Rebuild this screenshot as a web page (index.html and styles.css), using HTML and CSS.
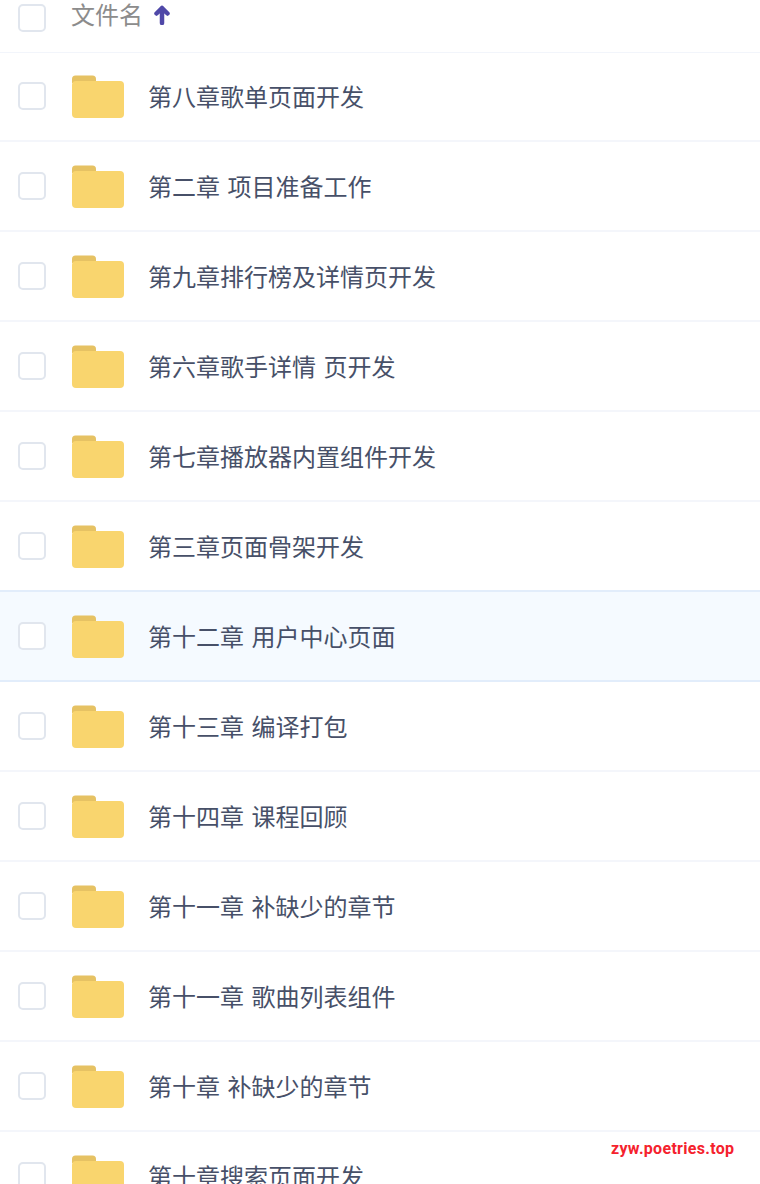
FILE: index.html
```html
<!DOCTYPE html>
<html lang="zh-CN">
<head>
    <meta charset="UTF-8">
    <meta name="viewport" content="width=device-width, initial-scale=1.0">
    <title>文件列表</title>
    <link rel="stylesheet" href="styles.css">
</head>
<body>
    <svg class="svg-defs" width="0" height="0">
        <symbol id="folder" viewBox="0 0 52 43">
            <path d="M0 4a3.500 3.500 0 0 1 3.500-3.500h17a3.500 3.500 0 0 1 3.500 3.500v4H0z" fill="#e6c263"/>
            <path d="M0 10a4 4 0 0 1 4-4h44a4 4 0 0 1 4 4v29a4 4 0 0 1-4 4H4a4 4 0 0 1-4-4z" fill="#f9d56e"/>
        </symbol>
    </svg>

    <div class="file-list">
        <div class="list-header">
            <span class="checkbox"></span>
            <span class="header-name">文件名</span>
            <svg class="sort-arrow" width="16" height="20" viewBox="0 0 16 20">
                <path d="M8 3V18M2.500 8.500 8 3 13.500 8.500" fill="none" stroke="#4f48a8" stroke-width="4.500" stroke-linecap="round" stroke-linejoin="round"/>
            </svg>
        </div>

        <div class="file-row"><span class="checkbox"></span><svg class="folder-icon"><use href="#folder"/></svg><span class="file-name">第八章歌单页面开发</span></div>
        <div class="file-row"><span class="checkbox"></span><svg class="folder-icon"><use href="#folder"/></svg><span class="file-name">第二章 项目准备工作</span></div>
        <div class="file-row"><span class="checkbox"></span><svg class="folder-icon"><use href="#folder"/></svg><span class="file-name">第九章排行榜及详情页开发</span></div>
        <div class="file-row"><span class="checkbox"></span><svg class="folder-icon"><use href="#folder"/></svg><span class="file-name">第六章歌手详情 页开发</span></div>
        <div class="file-row"><span class="checkbox"></span><svg class="folder-icon"><use href="#folder"/></svg><span class="file-name">第七章播放器内置组件开发</span></div>
        <div class="file-row"><span class="checkbox"></span><svg class="folder-icon"><use href="#folder"/></svg><span class="file-name">第三章页面骨架开发</span></div>
        <div class="file-row active"><span class="checkbox"></span><svg class="folder-icon"><use href="#folder"/></svg><span class="file-name">第十二章 用户中心页面</span></div>
        <div class="file-row"><span class="checkbox"></span><svg class="folder-icon"><use href="#folder"/></svg><span class="file-name">第十三章 编译打包</span></div>
        <div class="file-row"><span class="checkbox"></span><svg class="folder-icon"><use href="#folder"/></svg><span class="file-name">第十四章 课程回顾</span></div>
        <div class="file-row"><span class="checkbox"></span><svg class="folder-icon"><use href="#folder"/></svg><span class="file-name">第十一章 补缺少的章节</span></div>
        <div class="file-row"><span class="checkbox"></span><svg class="folder-icon"><use href="#folder"/></svg><span class="file-name">第十一章 歌曲列表组件</span></div>
        <div class="file-row"><span class="checkbox"></span><svg class="folder-icon"><use href="#folder"/></svg><span class="file-name">第十章 补缺少的章节</span></div>
        <div class="file-row"><span class="checkbox"></span><svg class="folder-icon"><use href="#folder"/></svg><span class="file-name">第十章搜索页面开发</span></div>
    </div>

    <div class="watermark">zyw.poetries.top</div>
</body>
</html>
```

FILE: styles.css
```css
html, body {
    height: 100%;
}
body {
    margin: 0;
    background-color: #ffffff;
    font-family: 'Noto Sans CJK SC', 'Noto Sans', sans-serif;
    overflow: hidden;
    position: relative;
}
.svg-defs {
    display: block;
}
.list-header {
    height: 48px;
    padding: 4px 0 0 18px;
    display: flex;
    align-items: flex-start;
    border-bottom: 1px solid #f2f5fb;
    margin-bottom: -1px; /* first row starts on the header line */
}
.checkbox {
    width: 28px;
    height: 28px;
    box-sizing: border-box;
    border: 2px solid #e1e6ee;
    border-radius: 5px;
    background-color: #ffffff;
    flex-shrink: 0;
}
.header-name {
    margin: -2px 0 0 25px;
    font-size: 24px;
    line-height: 24px;
    color: #8c8c8c;
}
.sort-arrow {
    margin: 1px 0 0 11px;
}
.file-row {
    height: 88px;
    padding-left: 18px;
    display: flex;
    align-items: center;
    border-bottom: 2px solid #f4f6fb;
}
.file-row.active {
    margin-top: -2px;
    border-top: 2px solid #e2edfb;
    border-bottom-color: #e2edfb;
    background-color: #f5faff;
}
.folder-icon {
    width: 52px;
    height: 43px;
    margin: 1px 25px 0 26px;
    flex-shrink: 0;
}
.file-name {
    font-size: 24px;
    color: #475068;
    white-space: nowrap;
    word-spacing: 2px;
    margin-left: -1px;
    margin-bottom: 2px;
}
.watermark {
    position: absolute;
    left: 611px;
    top: 1139px;
    font-family: 'Roboto', sans-serif;
    font-size: 16px;
    font-weight: bold;
    line-height: 20px;
    letter-spacing: 0.3px;
    color: #f5222d;
}
```
